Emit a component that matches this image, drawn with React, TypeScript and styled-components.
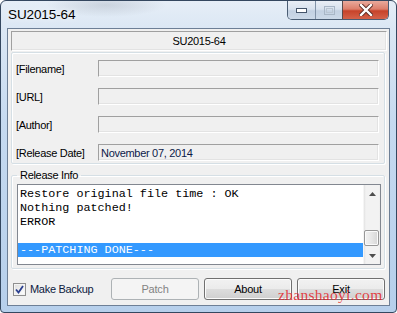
import { Fragment, ReactElement } from "react";
import styled, { createGlobalStyle } from "styled-components";

const Global = createGlobalStyle`
  html, body {
    margin: 0;
    padding: 0;
    width: 397px;
    height: 313px;
    overflow: hidden;
    background: #ffffff;
  }
  * {
    box-sizing: border-box;
  }
`;

const Window = styled.div`
  position: relative;
  width: 397px;
  height: 313px;
  border: 1px solid #34475f;
  border-radius: 6px 6px 4px 4px;
  background:
    radial-gradient(ellipse 60px 12px at 105px 4px, rgba(110, 120, 135, 0.22), rgba(110, 120, 135, 0) 100%),
    linear-gradient(to bottom, #e6eef7 0, #dbe7f4 28px, #c6daf0 120px, #b6cfeb 100%);
  display: flex;
  flex-direction: column;
  font-family: "Liberation Sans", Arial, sans-serif;
  font-size: 11px;
  letter-spacing: -0.3px;
  color: #000;
  overflow: hidden;
`;

const TitleBar = styled.div`
  height: 27px;
  display: flex;
  align-items: flex-start;
  padding: 0 7px 0 7px;
`;

const Title = styled.div`
  font-family: "Liberation Sans", Arial, sans-serif;
  font-size: 13.5px;
  letter-spacing: -0.1px;
  color: #000;
  margin-top: 6px;
  text-shadow: 0 0 6px rgba(255, 255, 255, 0.9);
`;

const Caption = styled.div`
  margin-left: auto;
  display: flex;
  height: 19px;
  border: 1px solid #4a5d74;
  border-top: none;
  border-radius: 0 0 5px 5px;
  overflow: hidden;
`;

const CapButton = styled.div<{ $w: number; $close?: boolean }>`
  width: ${p => p.$w}px;
  height: 100%;
  display: flex;
  align-items: center;
  justify-content: center;
  border-left: ${p => (p.$close ? "1px solid #5b4a4a" : "1px solid #8293a8")};
  &:first-child {
    border-left: none;
  }
  background: ${p =>
    p.$close
      ? "linear-gradient(to bottom, #e9aa9c 0%, #dc7e6b 45%, #c7432a 55%, #d4624a 100%)"
      : "linear-gradient(to bottom, #e9eef5 0%, #d8e2ee 45%, #c3d1e2 55%, #ccd9e8 100%)"};
`;

const Client = styled.div`
  flex: 1;
  margin: 0 6px 6px 6px;
  border: 1px solid #6d7f96;
  background: #f0f0f0;
  display: flex;
  flex-direction: column;
  padding: 2px 2px 0 3px;
`;

const Header = styled.div`
  height: 20px;
  border: 1px solid;
  border-color: #a0a0a0 #ffffff #ffffff #a0a0a0;
  box-shadow: inset -1px -1px 0 #e3e3e3;
  display: flex;
  align-items: center;
  justify-content: center;
`;

const InfoGroup = styled.div`
  margin: 1px 2px 0 0;
  height: 112px;
  border: 1px solid #d5dfe5;
  border-radius: 2px;
  box-shadow: 1px 1px 0 #ffffff, inset 1px 1px 0 #ffffff;
  display: grid;
  grid-template-columns: 82px 1fr;
  row-gap: 11px;
  align-content: start;
  padding: 7px 5px 0 4px;
`;

const Label = styled.div`
  height: 17px;
  display: flex;
  align-items: center;
`;

const Field = styled.div`
  height: 17px;
  border: 1px solid;
  border-color: #a0a0a0 #ffffff #ffffff #a0a0a0;
  box-shadow: inset -1px -1px 0 #e3e3e3;
  display: flex;
  align-items: center;
  padding-left: 2px;
  color: #0d1a4a;
`;

const LogGroup = styled.fieldset`
  margin: 5px 2px 0 0;
  padding: 0 3px 3px 5px;
  border: 1px solid #d5dfe5;
  border-radius: 2px;
  box-shadow: 1px 1px 0 #ffffff, inset 1px 1px 0 #ffffff;
  min-width: 0;
`;

const Legend = styled.legend`
  padding: 0 3px;
  line-height: 13px;
`;

const Log = styled.div`
  margin-top: 2px;
  height: 81px;
  border: 1px solid #828790;
  background: #ffffff;
  display: flex;
`;

const Lines = styled.div`
  flex: 1;
  padding-top: 2px;
  font-family: "Liberation Mono", "Courier New", monospace;
  font-size: 11.75px;
  letter-spacing: 0;
  white-space: pre;
`;

const Line = styled.div<{ $selected?: boolean }>`
  height: 14px;
  line-height: 14px;
  padding-left: 2px;
  background: ${p => (p.$selected ? "#3399ff" : "transparent")};
  color: ${p => (p.$selected ? "#ffffff" : "#000000")};
`;

const ScrollBar = styled.div`
  width: 17px;
  display: flex;
  flex-direction: column;
  background: linear-gradient(to right, #e3e3e3 0, #f2f2f2 2px, #f2f2f2 15px, #e3e3e3 17px);
  border-left: 1px solid #f5f5f5;
`;

const ScrollArrow = styled.div`
  height: 17px;
  display: flex;
  align-items: center;
  justify-content: center;
`;

const ScrollSpace = styled.div<{ $h: number }>`
  height: ${p => p.$h}px;
`;

const Thumb = styled.div`
  height: 16px;
  margin: 0 1px 0 0;
  border: 1px solid #979797;
  border-radius: 2px;
  background: linear-gradient(to right, #f2f2f2 0%, #e6e6e6 50%, #d6d6d6 100%);
  box-shadow: inset 0 0 0 1px #fafafa;
`;

const Bottom = styled.div`
  margin: 9px 2px 0 2px;
  height: 22px;
  display: flex;
  align-items: center;
`;

const Check = styled.label`
  display: flex;
  align-items: center;
  gap: 4px;
  color: #0d1a40;
`;

const Box = styled.span`
  width: 13px;
  height: 13px;
  border: 1px solid #8f8f8f;
  background: linear-gradient(135deg, #dcdcdc 0%, #f6f6f6 70%, #ffffff 100%);
  box-shadow: inset 0 0 0 1px #f4f4f4;
  display: flex;
  align-items: center;
  justify-content: center;
`;

const Buttons = styled.div`
  margin-left: auto;
  display: flex;
  gap: 5px;
`;

const Button = styled.button`
  width: 88px;
  height: 22px;
  font-family: "Liberation Sans", Arial, sans-serif;
  font-size: 11px;
  letter-spacing: -0.2px;
  color: #000;
  border: 1px solid #707070;
  border-radius: 3px;
  background: linear-gradient(to bottom, #f2f2f2 0%, #ebebeb 50%, #dddddd 50%, #cfcfcf 100%);
  box-shadow: inset 0 0 0 1px #fbfbfb;
  padding: 0;

  &:disabled {
    color: #838383;
    border-color: #adb2b5;
    background: #f4f4f4;
    box-shadow: none;
  }
`;

const Watermark = styled.div`
  position: absolute;
  left: 277px;
  top: 285px;
  font-family: "Liberation Serif", "Times New Roman", serif;
  font-size: 15.5px;
  letter-spacing: 0.3px;
  color: rgba(228, 30, 40, 0.85);
  pointer-events: none;
`;

const fields = [
  { label: "[Filename]", value: "" },
  { label: "[URL]", value: "" },
  { label: "[Author]", value: "" },
  { label: "[Release Date]", value: "November 07, 2014" },
];

const log = ["Restore original file time : OK", "Nothing patched!", "ERROR", "", "---PATCHING DONE---"];

export default function App(): ReactElement {
  return (
    <>
      <Global />
      <Window>
        <TitleBar>
          <Title>SU2015-64</Title>
          <Caption>
            <CapButton $w={27}>
              <svg width="11" height="5" viewBox="0 0 11 5">
                <rect x="0.5" y="0.5" width="10" height="4" fill="#ffffff" stroke="#44546a" />
              </svg>
            </CapButton>
            <CapButton $w={27}>
              <svg width="11" height="9" viewBox="0 0 11 9">
                <rect x="0.5" y="0.5" width="10" height="8" fill="none" stroke="#a8b6c6" />
                <rect x="2.5" y="2.5" width="6" height="4" fill="none" stroke="#b9c5d2" />
              </svg>
            </CapButton>
            <CapButton $w={46} $close>
              <svg width="14" height="12" viewBox="0 0 14 12">
                <path d="M2 1 L12 11 M12 1 L2 11" stroke="#5a2a22" strokeWidth="4.2" strokeLinecap="square" />
                <path d="M2 1 L12 11 M12 1 L2 11" stroke="#ffffff" strokeWidth="2.4" strokeLinecap="square" />
              </svg>
            </CapButton>
          </Caption>
        </TitleBar>
        <Client>
          <Header>SU2015-64</Header>
          <InfoGroup>
            {fields.map(f => (
              <Fragment key={f.label}>
                <Label>{f.label}</Label>
                <Field>{f.value}</Field>
              </Fragment>
            ))}
          </InfoGroup>
          <LogGroup>
            <Legend>Release Info</Legend>
            <Log>
              <Lines>
                {log.map((l, i) => (
                  <Line key={i} $selected={i === log.length - 1}>
                    {l}
                  </Line>
                ))}
              </Lines>
              <ScrollBar>
                <ScrollArrow>
                  <svg width="7" height="4" viewBox="0 0 7 4">
                    <path d="M3.5 0 L7 4 L0 4 Z" fill="#4d4d4d" />
                  </svg>
                </ScrollArrow>
                <ScrollSpace $h={28} />
                <Thumb />
                <ScrollSpace $h={1} />
                <ScrollArrow>
                  <svg width="7" height="4" viewBox="0 0 7 4">
                    <path d="M0 0 L7 0 L3.5 4 Z" fill="#4d4d4d" />
                  </svg>
                </ScrollArrow>
              </ScrollBar>
            </Log>
          </LogGroup>
          <Bottom>
            <Check>
              <Box>
                <svg width="9" height="9" viewBox="0 0 9 9">
                  <path d="M1 4.5 L3.5 7.5 L8 1" fill="none" stroke="#2a3f8f" strokeWidth="1.8" />
                </svg>
              </Box>
              Make Backup
            </Check>
            <Buttons>
              <Button disabled>Patch</Button>
              <Button>About</Button>
              <Button>Exit</Button>
            </Buttons>
          </Bottom>
        </Client>
        <Watermark>zhanshaoyi.com</Watermark>
      </Window>
    </>
  );
}
